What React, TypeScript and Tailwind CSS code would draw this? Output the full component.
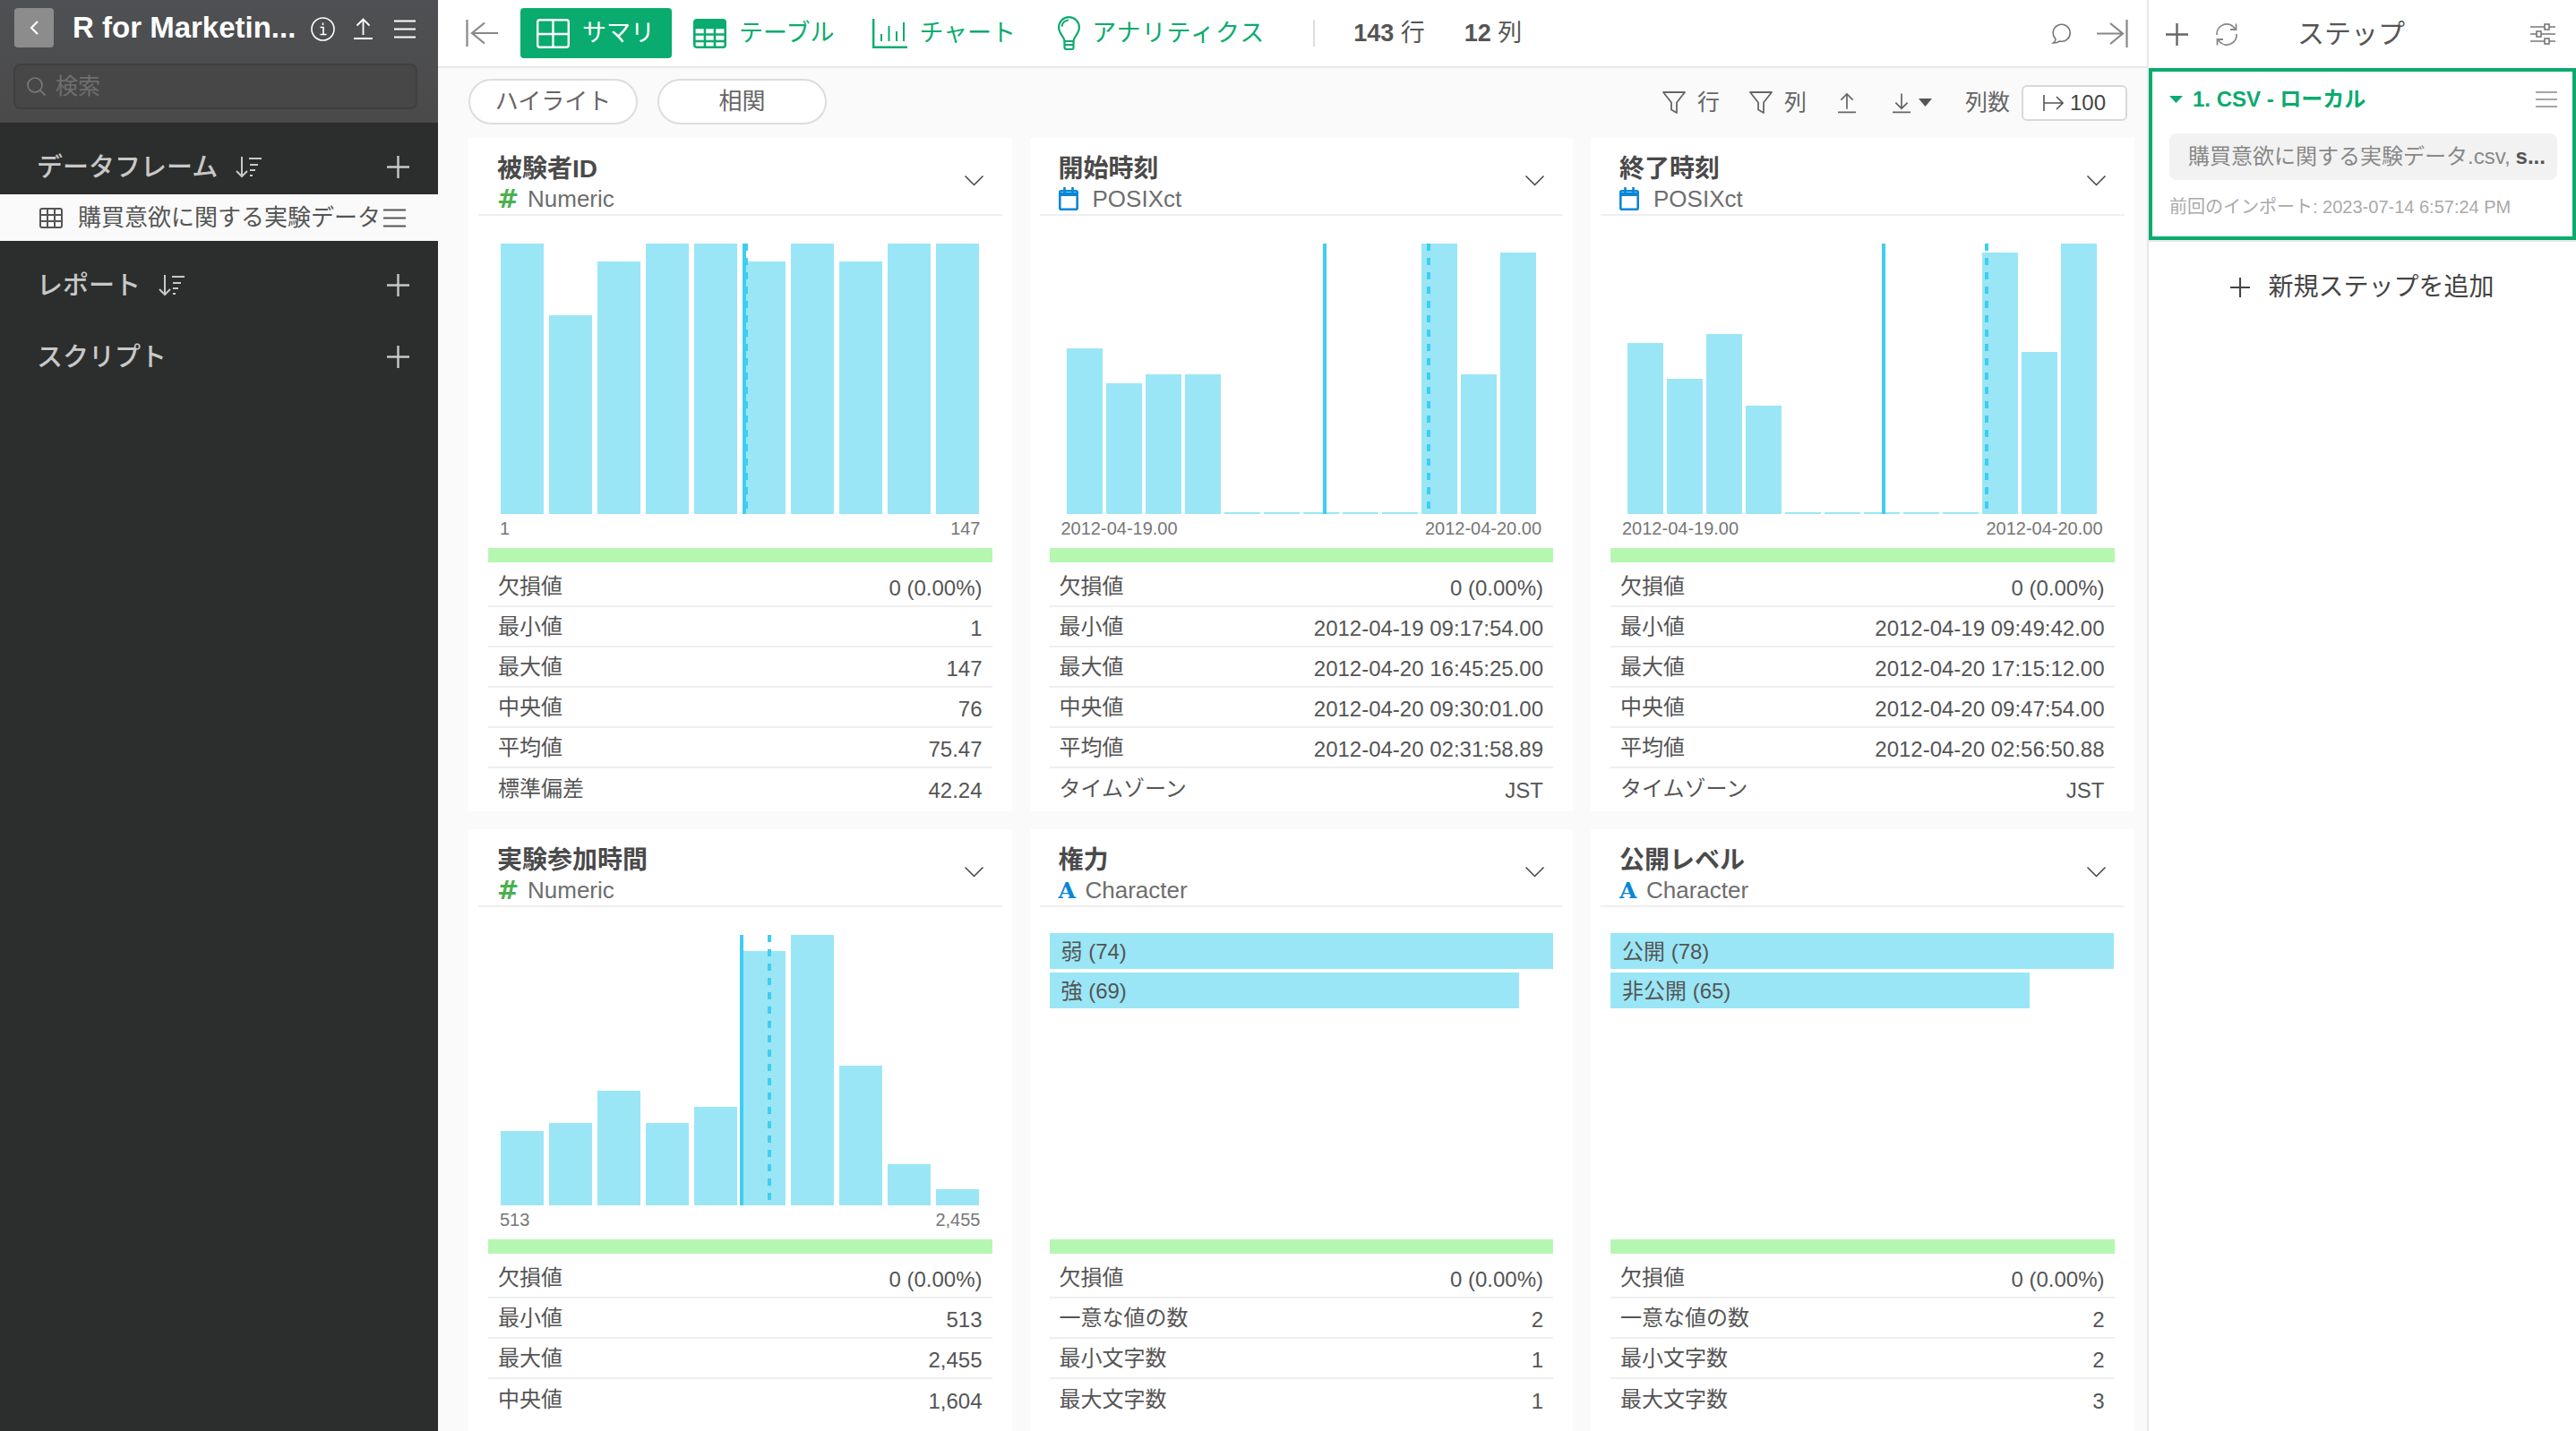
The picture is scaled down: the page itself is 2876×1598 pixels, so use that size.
import type { ReactNode } from "react";

type Hist = {
  kind: "hist";
  bars: number[];
  solid: number;
  dashed: number;
  min: string;
  max: string;
};
type Cats = { kind: "cats"; items: { label: string; width: number }[] };
type Card = {
  title: string;
  type: "Numeric" | "POSIXct" | "Character";
  body: Hist | Cats;
  rows: [string, string][];
};

const flat = [2, 2, 2, 2, 2];

const cards: Card[] = [
  {
    title: "被験者ID",
    type: "Numeric",
    body: { kind: "hist", bars: [302, 222, 282, 302, 302, 282, 302, 282, 302, 302], solid: 270, dashed: 272, min: "1", max: "147" },
    rows: [
      ["欠損値", "0 (0.00%)"],
      ["最小値", "1"],
      ["最大値", "147"],
      ["中央値", "76"],
      ["平均値", "75.47"],
      ["標準偏差", "42.24"],
    ],
  },
  {
    title: "開始時刻",
    type: "POSIXct",
    body: { kind: "hist", bars: [185, 146, 156, 156, ...flat, 302, 156, 292], solid: 291, dashed: 407, min: "2012-04-19.00", max: "2012-04-20.00" },
    rows: [
      ["欠損値", "0 (0.00%)"],
      ["最小値", "2012-04-19 09:17:54.00"],
      ["最大値", "2012-04-20 16:45:25.00"],
      ["中央値", "2012-04-20 09:30:01.00"],
      ["平均値", "2012-04-20 02:31:58.89"],
      ["タイムゾーン", "JST"],
    ],
  },
  {
    title: "終了時刻",
    type: "POSIXct",
    body: { kind: "hist", bars: [191, 151, 201, 121, ...flat, 292, 181, 302], solid: 289, dashed: 404, min: "2012-04-19.00", max: "2012-04-20.00" },
    rows: [
      ["欠損値", "0 (0.00%)"],
      ["最小値", "2012-04-19 09:49:42.00"],
      ["最大値", "2012-04-20 17:15:12.00"],
      ["中央値", "2012-04-20 09:47:54.00"],
      ["平均値", "2012-04-20 02:56:50.88"],
      ["タイムゾーン", "JST"],
    ],
  },
  {
    title: "実験参加時間",
    type: "Numeric",
    body: { kind: "hist", bars: [83, 92, 128, 92, 110, 284, 302, 156, 46, 18], solid: 267, dashed: 298, min: "513", max: "2,455" },
    rows: [
      ["欠損値", "0 (0.00%)"],
      ["最小値", "513"],
      ["最大値", "2,455"],
      ["中央値", "1,604"],
    ],
  },
  {
    title: "権力",
    type: "Character",
    body: { kind: "cats", items: [{ label: "弱 (74)", width: 562 }, { label: "強 (69)", width: 524 }] },
    rows: [
      ["欠損値", "0 (0.00%)"],
      ["一意な値の数", "2"],
      ["最小文字数", "1"],
      ["最大文字数", "1"],
    ],
  },
  {
    title: "公開レベル",
    type: "Character",
    body: { kind: "cats", items: [{ label: "公開 (78)", width: 562 }, { label: "非公開 (65)", width: 468 }] },
    rows: [
      ["欠損値", "0 (0.00%)"],
      ["一意な値の数", "2"],
      ["最小文字数", "2"],
      ["最大文字数", "3"],
    ],
  },
];

function Plus({ size = 25, color = "#c8c8c8" }: { size?: number; color?: string }) {
  return (
    <svg width={size} height={size} viewBox="0 0 25 25" fill="none" stroke={color} strokeWidth="2.4">
      <path d="M12.5 0v25M0 12.5h25" />
    </svg>
  );
}

function SortIcon() {
  return (
    <svg width="30" height="25" viewBox="0 0 30 25" fill="none" stroke="#c8c8c8" strokeWidth="2">
      <path d="M7 1v22M1 17l6 6 6-6" />
      <path d="M15 3h14M16 10h9M16 16h6M16 22h3" />
    </svg>
  );
}

function MenuIcon({ color = "#fff", w = 24 }: { color?: string; w?: number }) {
  return (
    <svg width={w} height="21" viewBox="0 0 24 21" fill="none" stroke={color} strokeWidth="1.8" preserveAspectRatio="none">
      <path d="M0 1.5h24M0 10.5h24M0 19.5h24" />
    </svg>
  );
}

function UpIcon({ color = "#fff", w = 21, h = 24 }: { color?: string; w?: number; h?: number }) {
  return (
    <svg width={w} height={h} viewBox="0 0 21 24" fill="none" stroke={color} strokeWidth="1.8">
      <path d="M10.5 19V1.5M3.5 8.5l7-7 7 7M0 23h21" />
    </svg>
  );
}

function Filter() {
  return (
    <svg width="28" height="27" viewBox="0 0 28 27" fill="none" stroke="#666" strokeWidth="1.8" strokeLinejoin="round">
      <path d="M2 2h24L17 13.5V25l-6-3.5v-8z" />
    </svg>
  );
}

function TypeIcon({ type }: { type: Card["type"] }) {
  if (type === "Numeric")
    return (
      <span className="w-[34px] text-[29px] leading-none font-bold text-[#4caf50] font-[family-name:'DejaVu_Sans',sans-serif]">
        #
      </span>
    );
  if (type === "POSIXct")
    return (
      <span className="flex w-[38px]">
        <svg width="22" height="26" viewBox="0 0 22 26" fill="none" stroke="#0a86d8" strokeWidth="2.6">
          <rect x="1.3" y="4.3" width="19.4" height="20.4" rx="1.5" />
          <path d="M1 8h20" strokeWidth="4" />
          <path d="M6.5 0v6M15.5 0v6" />
        </svg>
      </span>
    );
  return (
    <span className="w-[30px] text-[25px] leading-none font-bold text-[#0a86d8] font-[family-name:'DejaVu_Serif',serif]">
      A
    </span>
  );
}

function Histogram({ body }: { body: Hist }) {
  const wide = body.bars.length === 10;
  return (
    <div className="pt-[31px]">
      <div className="relative mx-[36px] h-[302px]">
        <div className={`flex h-full items-end justify-center ${wide ? "gap-[6px]" : "gap-[4px]"}`}>
          {body.bars.map((h, i) => (
            <div key={i} className={`bg-[#9ae6f6] ${wide ? "w-[48px]" : "w-[40px]"}`} style={{ height: h }} />
          ))}
        </div>
        <div className="absolute top-0 h-full w-[4px] bg-[#3fcdf2]" style={{ left: body.solid }} />
        <div
          className="absolute top-0 h-[296px] w-[4px] bg-[repeating-linear-gradient(to_bottom,#3fcdf2_0px,#3fcdf2_8px,transparent_8px,transparent_16px)]"
          style={{ left: body.dashed }}
        />
      </div>
      <div className="mx-[35px] mt-[4px] flex h-[24px] items-center justify-between text-[20px] text-[#777]">
        <span>{body.min}</span>
        <span>{body.max}</span>
      </div>
    </div>
  );
}

function SummaryCard({ card }: { card: Card }) {
  const { body } = card;
  return (
    <section className="h-[752px] bg-white">
      <header className="relative mx-[11px] flex h-[87px] flex-col border-b-2 border-[#efefef] pl-[21px]">
        <h3 className="mt-[20px] h-[30px] text-[28px] leading-[30px] font-bold text-[#4a4a4a]">{card.title}</h3>
        <div className="mt-[4px] flex h-[28px] items-center text-[26px] text-[#6e6e6e]">
          <TypeIcon type={card.type} />
          {card.type}
        </div>
        <svg className="absolute top-[42px] right-[21px]" width="21" height="12" viewBox="0 0 21 12" fill="none" stroke="#444" strokeWidth="1.5">
          <path d="M.5.5l10 10 10-10" />
        </svg>
      </header>
      <div className="h-[371px]">
        {body.kind === "hist" ? (
          <Histogram body={body} />
        ) : (
          <div className="mx-[22px] flex flex-col gap-[4px] pt-[29px]">
            {body.items.map((it) => (
              <div key={it.label} className="flex h-[40px] items-center bg-[#9ae6f6] pt-[2px] pl-[13px] text-[24px] text-[#555]" style={{ width: it.width }}>
                {it.label}
              </div>
            ))}
          </div>
        )}
      </div>
      <div className="mx-[22px]">
        <div className="h-[16px] bg-[#b5f7b0]" />
        {card.rows.map(([label, value], i) => (
          <div
            key={label}
            className={`flex items-center justify-between px-[11px] text-[24px] text-[#555] ${i === 0 ? "h-[50px] pt-[4px]" : "h-[45px]"} ${i === card.rows.length - 1 ? "" : "border-b-2 border-[#efefef]"}`}
          >
            <span className="pt-[1px]">{label}</span>
            <span className="pt-[5px]">{value}</span>
          </div>
        ))}
      </div>
    </section>
  );
}

function SidebarSection({ title, sort, children }: { title: string; sort?: boolean; children?: ReactNode }) {
  return (
    <>
      <div className="flex h-[80px] items-center pt-[18px] pr-[32px] pl-[41px] text-[29px] font-medium text-[#c8c8c8]">
        <span className="mt-[3px]">{title}</span>
        {sort && (
          <span className="ml-[20px] flex">
            <SortIcon />
          </span>
        )}
        <span className="ml-auto flex">
          <Plus />
        </span>
      </div>
      {children}
    </>
  );
}

function Sidebar() {
  return (
    <aside className="flex w-[489px] shrink-0 flex-col bg-[#2c2e2d]">
      <div className="h-[137px] bg-linear-to-b from-[#4f5053] to-[#4a4a4a]">
        <div className="flex h-[62px] items-center pl-[16px]">
          <span className="flex h-[44px] w-[44px] items-center justify-center rounded-[4px] bg-[#8c8c8c]">
            <svg width="12" height="18" viewBox="0 0 12 18" fill="none" stroke="#fff" strokeWidth="2.2">
              <path d="M10 2L3 9l7 7" />
            </svg>
          </span>
          <span className="ml-[21px] w-[258px] text-[33px] font-bold whitespace-nowrap text-white">R for Marketin...</span>
          <svg className="mt-[2px] ml-[8px]" width="27" height="27" viewBox="0 0 27 27" fill="none" stroke="#fff" strokeWidth="1.6">
            <circle cx="13.5" cy="13.5" r="12.5" />
            <path d="M10.5 11.5h3.5v8M10.5 19.5h7M13.5 6.5v2.5" />
          </svg>
          <span className="mt-[2px] ml-[21px] flex">
            <UpIcon />
          </span>
          <span className="mt-[2px] ml-[24px] flex">
            <MenuIcon />
          </span>
        </div>
        <div className="mt-[9px] mr-[23px] ml-[15px] flex h-[51px] items-center rounded-[8px] border-2 border-[#404040] bg-[#474747] pl-[13px]">
          <svg width="21" height="21" viewBox="0 0 21 21" fill="none" stroke="#7a7a7a" strokeWidth="1.6">
            <circle cx="9" cy="9" r="8" />
            <path d="M14.5 14.5l6 6" />
          </svg>
          <span className="ml-[11px] text-[25px] text-[#6f6f6f]">検索</span>
        </div>
      </div>
      <SidebarSection title="データフレーム" sort>
        <div className="flex h-[52px] items-center bg-[#fafafa] pl-[44px] text-[26px] text-[#555]">
          <svg width="26" height="23" viewBox="0 0 26 23" fill="none" stroke="#555" strokeWidth="2">
            <rect x="1" y="1" width="24" height="21" rx="2" />
            <path d="M1 8h24M1 15h24M9 1v21M17 1v21" />
          </svg>
          <span className="ml-[17px] w-[341px] whitespace-nowrap">購買意欲に関する実験データ</span>
          <MenuIcon color="#555" w={25} />
        </div>
      </SidebarSection>
      <SidebarSection title="レポート" sort />
      <SidebarSection title="スクリプト" />
    </aside>
  );
}

function TopBar() {
  return (
    <div className="flex h-[76px] shrink-0 items-center border-b-2 border-[#e8e8e8] bg-white pl-[31px] text-[27px] whitespace-nowrap text-[#0aab6e]">
      <svg width="36" height="30" viewBox="0 0 36 30" fill="none" stroke="#888" strokeWidth="2.2">
        <path d="M1.5 0v30M36 15H7M21 3.5L7 15l14 11.5" />
      </svg>
      <div className="ml-[25px] flex h-[56px] w-[169px] items-center rounded-[4px] bg-[#0aab6e] pl-[18px] text-white">
        <svg width="37" height="33" viewBox="0 0 37 33" fill="none" stroke="#fff" strokeWidth="2.4">
          <rect x="1.2" y="1.2" width="34.6" height="30.6" rx="2.5" />
          <path d="M18.5 1v31M1 17h35" />
        </svg>
        <span className="ml-[14px]">サマリ</span>
      </div>
      <svg className="ml-[24px]" width="37" height="33" viewBox="0 0 37 33" fill="none" stroke="#0aab6e" strokeWidth="2.6">
        <rect x="1.3" y="1.3" width="34.4" height="30.4" rx="2.5" />
        <path d="M1 10h35M1 17.5h35M1 25h35M13 9v23M24 9v23" />
        <path d="M1 5.5h35" strokeWidth="8" />
      </svg>
      <span className="ml-[14px]">テーブル</span>
      <svg className="ml-[43px]" width="39" height="33" viewBox="0 0 39 33" fill="none" stroke="#0aab6e" strokeWidth="2.4">
        <path d="M1.2 0v31.8H39" />
        <path d="M10 25v-8M18.5 25V8M27 25V14M35 25V4" strokeWidth="2" />
      </svg>
      <span className="ml-[13px]">チャート</span>
      <svg className="ml-[47px]" width="25" height="38" viewBox="0 0 25 38" fill="none" stroke="#0aab6e" strokeWidth="2.2">
        <path d="M7.5 28c0-5-6.4-8-6.4-15.5a11.4 11.4 0 0 1 22.8 0C23.9 20 17.5 23 17.5 28z" />
        <path d="M7.5 28v7a2 2 0 0 0 2 2h6a2 2 0 0 0 2-2v-7M7.5 32h10M12 4.5a8 8 0 0 0-7.5 7" />
      </svg>
      <span className="ml-[13px] tracking-[1px]">アナリティクス</span>
      <span className="ml-[54px] h-[30px] w-[2px] bg-[#ddd]" />
      <span className="ml-[43px] text-[#555]">
        <b>143</b> 行
      </span>
      <span className="ml-[44px] text-[#555]">
        <b>12</b> 列
      </span>
      <svg className="ml-auto" width="26" height="23" viewBox="0 0 26 23" fill="none" stroke="#777" strokeWidth="1.6">
        <path d="M5 17.5A9.5 9.5 0 1 1 9.5 20c-2 1.5-5 2-7 2 1.5-1 2.5-2.5 2.5-4.5z" />
      </svg>
      <svg className="mr-[21px] ml-[25px]" width="35" height="31" viewBox="0 0 35 31" fill="none" stroke="#888" strokeWidth="2.2">
        <path d="M33.5 0v31M0 15.5h29M15 4l14 11.5L15 27" />
      </svg>
    </div>
  );
}

function ToolBar() {
  return (
    <div className="flex h-[78px] shrink-0 items-start pt-[12px] pr-[22px] pl-[34px] text-[25px] whitespace-nowrap text-[#666]">
      <span className="flex h-[51px] w-[189px] items-center justify-center rounded-full border-2 border-[#ddd] bg-white text-[26px]">ハイライト</span>
      <span className="ml-[22px] flex h-[51px] w-[189px] items-center justify-center rounded-full border-2 border-[#ddd] bg-white text-[26px]">相関</span>
      <div className="mt-[1px] ml-auto flex h-[51px] items-center">
        <Filter />
        <span className="ml-[12px]">行</span>
        <span className="ml-[32px] flex">
          <Filter />
        </span>
        <span className="ml-[12px]">列</span>
        <span className="ml-[35px] flex">
          <UpIcon color="#666" w={20} />
        </span>
        <svg className="ml-[41px]" width="20" height="24" viewBox="0 0 21 24" fill="none" stroke="#666" strokeWidth="1.8">
          <path d="M10.5 1v17.5M3.5 11.5l7 7 7-7M0 23h21" />
        </svg>
        <svg className="ml-[9px]" width="15" height="9" viewBox="0 0 15 9" fill="#555">
          <path d="M0 0h15L7.5 9z" />
        </svg>
        <span className="ml-[37px]">列数</span>
        <div className="ml-[13px] flex h-[40px] w-[118px] items-center rounded-[6px] border-2 border-[#d8d8d8] bg-white pl-[22px] text-[24px] text-[#444]">
          <svg width="23" height="20" viewBox="0 0 23 20" fill="none" stroke="#555" strokeWidth="1.6">
            <path d="M1 1v18M1 10h21M15 3l7 7-7 7" />
          </svg>
          <span className="ml-[7px]">100</span>
        </div>
      </div>
    </div>
  );
}

function StepsPane() {
  return (
    <aside className="flex w-[479px] shrink-0 flex-col border-l-2 border-[#e8e8e8] bg-white whitespace-nowrap">
      <div className="flex h-[76px] items-center pr-[23px] pl-[19px]">
        <Plus size={25} color="#666" />
        <svg className="ml-[29px]" width="28" height="27" viewBox="0 0 28 27" fill="none" stroke="#888" strokeWidth="1.8">
          <path d="M3 14a11 11 0 0 1 19-8.5l2 2.500M24.5 1.500V8h-6.500M25 13a11 11 0 0 1-19 8.500L4 19M3.500 25.500V19H10" />
        </svg>
        <span className="ml-[65px] pb-[2px] text-[30px] text-[#555]">ステップ</span>
        <svg className="ml-auto" width="28" height="24" viewBox="0 0 28 24" fill="none" stroke="#777" strokeWidth="1.6">
          <path d="M0 4h28M0 12h28M0 20h28" />
          <rect x="16" y="1" width="5" height="6" fill="#fff" />
          <rect x="7" y="9" width="5" height="6" fill="#fff" />
          <rect x="16" y="17" width="5" height="6" fill="#fff" />
        </svg>
      </div>
      <div className="h-[192px] border-4 border-[#0aab6e] pt-[12px] pr-[17px] pl-[19px]">
        <div className="flex h-[38px] items-center">
          <svg width="15" height="8" viewBox="0 0 15 8" fill="#0aab6e">
            <path d="M0 0h15L7.5 8z" />
          </svg>
          <span className="ml-[11px] text-[24px] font-bold text-[#0aab6e]">1. CSV - ローカル</span>
          <span className="ml-auto flex">
            <svg width="24" height="18" viewBox="0 0 24 18" fill="none" stroke="#888" strokeWidth="1.6">
              <path d="M0 1h24M0 9h24M0 17h24" />
            </svg>
          </span>
        </div>
        <div className="mt-[19px] flex h-[52px] items-center overflow-hidden rounded-[8px] bg-[#f2f2f2] pl-[21px] text-[24px] text-[#888]">
          <span>購買意欲に関する実験データ.csv,</span>
          <span className="ml-[6px] font-bold text-[#555]">s...</span>
        </div>
        <div className="mt-[18px] h-[24px] text-[20px] leading-[24px] text-[#aaa]">前回のインポート: 2023-07-14 6:57:24 PM</div>
      </div>
      <div className="flex h-[102px] items-center justify-center border-t-2 border-[#e8e8e8] pt-[2px] text-[28px] text-[#444]">
        <Plus size={22} color="#444" />
        <span className="ml-[20px]">新規ステップを追加</span>
      </div>
    </aside>
  );
}

export default function App() {
  return (
    <div className="flex h-[1598px] w-[2876px] overflow-hidden font-[family-name:'Liberation_Sans','Noto_Sans_CJK_JP',sans-serif]">
      <Sidebar />
      <main className="flex min-w-0 flex-1 flex-col bg-[#fafafa]">
        <TopBar />
        <ToolBar />
        <div className="grid grid-cols-[repeat(3,606.5px)] gap-[20px] pl-[34px]">
          {cards.map((c) => (
            <SummaryCard key={c.title} card={c} />
          ))}
        </div>
      </main>
      <StepsPane />
    </div>
  );
}
